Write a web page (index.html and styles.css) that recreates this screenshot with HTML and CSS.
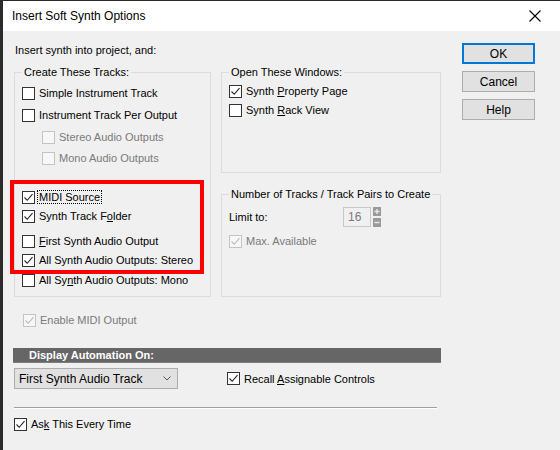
FILE: index.html
```html
<!DOCTYPE html>
<html>
<head>
<meta charset="utf-8">
<link rel="stylesheet" href="styles.css">
</head>
<body>
<div class="window">
  <div class="titlebar">
    <span class="title">Insert Soft Synth Options</span>
    <svg class="close" width="12" height="12" viewBox="0 0 12 12"><path d="M0.5 0.5 L11.5 11.5 M11.5 0.5 L0.5 11.5" stroke="#000" stroke-width="1.1" fill="none"/></svg>
  </div>
  <div class="content">
    <div class="main">
      <div class="intro">Insert synth into project, and:</div>
      <div class="groups">
        <fieldset class="group create">
          <legend>Create These Tracks:</legend>
          <div class="row mt7"><span class="cb"></span><span>Simple Instrument Track</span></div>
          <div class="row mt8"><span class="cb"></span><span>Instrument Track Per Output</span></div>
          <div class="row mt8 indent dis"><span class="cb"></span><span>Stereo Audio Outputs</span></div>
          <div class="row mt7 indent dis"><span class="cb"></span><span>Mono Audio Outputs</span></div>
          <div class="row mt25"><span class="cb on"><svg viewBox="0 0 11 11"><path d="M1.5 5.5 L4.2 8.3 L9.5 2.2" /></svg></span><span class="focus">MIDI Source</span></div>
          <div class="row mt5"><span class="cb on"><svg viewBox="0 0 11 11"><path d="M1.5 5.5 L4.2 8.3 L9.5 2.2" /></svg></span><span>Synth Track F<u>o</u>lder</span></div>
          <div class="row mt11"><span class="cb"></span><span><u>F</u>irst Synth Audio Output</span></div>
          <div class="row mt5"><span class="cb on"><svg viewBox="0 0 11 11"><path d="M1.5 5.5 L4.2 8.3 L9.5 2.2" /></svg></span><span>All Synth Audio Outputs: Stereo</span></div>
          <div class="row mt6"><span class="cb"></span><span>All Sy<u>n</u>th Audio Outputs: Mono</span></div>
        </fieldset>
        <div class="rightcol">
          <fieldset class="group windows">
            <legend>Open These Windows:</legend>
            <div class="row mt5"><span class="cb on"><svg viewBox="0 0 11 11"><path d="M1.5 5.5 L4.2 8.3 L9.5 2.2" /></svg></span><span>Synth <u>P</u>roperty Page</span></div>
            <div class="row mt5"><span class="cb"></span><span>Synth <u>R</u>ack View</span></div>
          </fieldset>
          <fieldset class="group number">
            <legend>Number of Tracks / Track Pairs to Create</legend>
            <div class="limit">
              <span class="limit-label">Limit to:</span>
              <span class="numbox">16</span>
              <svg class="spin" width="8" height="20" viewBox="0 0 8 20">
                <rect x="0" y="0" width="8" height="9" fill="#9a9a9a"/>
                <rect x="0" y="11" width="8" height="9" fill="#9a9a9a"/>
                <path d="M1.5 4.5 H6.5 M4 2 V7 M1.5 15.5 H6.5" stroke="#e8e8e8" stroke-width="1.4"/>
              </svg>
            </div>
            <div class="row mt7 dis"><span class="cb on"><svg viewBox="0 0 11 11"><path d="M1.5 5.5 L4.2 8.3 L9.5 2.2" /></svg></span><span>Max. Available</span></div>
          </fieldset>
        </div>
      </div>
      <div class="row enable dis"><span class="cb on"><svg viewBox="0 0 11 11"><path d="M1.5 5.5 L4.2 8.3 L9.5 2.2" /></svg></span><span>Enable MIDI Output</span></div>
      <div class="bar">Display Automation On:</div>
      <div class="autorow">
        <div class="select">
          <span>First Synth Audio Track</span>
          <svg width="8" height="5" viewBox="0 0 8 5"><path d="M0.5 0.5 L4 4 L7.5 0.5" stroke="#555" fill="none"/></svg>
        </div>
        <div class="row recall"><span class="cb on"><svg viewBox="0 0 11 11"><path d="M1.5 5.5 L4.2 8.3 L9.5 2.2" /></svg></span><span>Recall <u>A</u>ssignable Controls</span></div>
      </div>
      <div class="sep"></div>
      <div class="row ask"><span class="cb on"><svg viewBox="0 0 11 11"><path d="M1.5 5.5 L4.2 8.3 L9.5 2.2" /></svg></span><span>As<u>k</u> This Every Time</span></div>
    </div>
    <div class="side">
      <div class="btn default">OK</div>
      <div class="btn">Cancel</div>
      <div class="btn">Help</div>
    </div>
  </div>
  <div class="highlight"></div>
</div>
</body>
</html>
```
FILE: styles.css
```css
html, body {
  margin: 0;
  padding: 0;
}
body {
  width: 560px;
  height: 450px;
  overflow: hidden;
  background: #2b2b2b;
  font-family: "Liberation Sans", Arial, sans-serif;
  font-size: 11px;
  color: #000;
}
.window {
  position: relative;
  margin-left: 3px;
  margin-top: 1px;
  height: 449px;
  background: #f0f0f0;
}
.titlebar {
  height: 30px;
  background: #fff;
  display: flex;
  align-items: center;
  justify-content: space-between;
  padding: 0 19px 0 9px;
}
.title {
  font-size: 12px;
  color: #000;
}
.close {
  display: block;
}
.content {
  display: flex;
}
.main {
  width: 430px;
  padding-left: 10px;
  padding-top: 12px;
}
.intro {
  height: 14px;
  line-height: 14px;
  padding-left: 2px;
}
.groups {
  display: flex;
  margin-top: 8px;
  margin-left: 1px;
  gap: 10px;
}
fieldset.group {
  margin: 0;
  border: 1px solid #dcdcdc;
  padding: 0 6px 0 7px;
  box-sizing: border-box;
  min-width: 0;
}
fieldset.group legend {
  padding: 0 2px;
  margin-left: 0;
  line-height: 14px;
  height: 14px;
}
.create {
  width: 197px;
  height: 232px;
}
.rightcol {
  width: 220px;
  display: flex;
  flex-direction: column;
}
.windows {
  height: 108px;
}
.number {
  margin-top: 14px !important;
  height: 110px;
}
.row {
  display: flex;
  align-items: center;
  height: 14px;
  line-height: 14px;
  white-space: nowrap;
}
.mt5 { margin-top: 5px; }
.mt6 { margin-top: 6px; }
.mt7 { margin-top: 7px; }
.mt8 { margin-top: 8px; }
.mt11 { margin-top: 11px; }
.mt25 { margin-top: 25px; }
.indent {
  padding-left: 20px;
}
.cb {
  width: 13px;
  height: 13px;
  box-sizing: border-box;
  border: 1px solid #333;
  background: #fff;
  margin-right: 4px;
  flex: none;
  display: flex;
  align-items: center;
  justify-content: center;
}
.cb svg {
  width: 11px;
  height: 11px;
  display: block;
}
.cb svg path {
  fill: none;
  stroke: #222;
  stroke-width: 1.1;
}
.dis {
  color: #7a7a7a;
}
.dis .cb {
  border-color: #c4c4c4;
  background: #f7f7f7;
}
.dis .cb svg path {
  stroke: #b8b8b8;
}
.focus {
  outline: 1px dotted #000;
  outline-offset: 0;
  line-height: 12px;
  padding: 0 1px;
  margin-left: -1px;
}
u {
  text-decoration: underline;
  text-underline-offset: 1px;
}
.limit {
  display: flex;
  align-items: center;
  height: 20px;
  margin-top: 6px;
}
.limit-label {
  width: 114px;
}
.numbox {
  width: 28px;
  height: 20px;
  box-sizing: border-box;
  border: 1px solid #c8c8c8;
  background: #f0f0f0;
  color: #7a7a7a;
  font-size: 12px;
  line-height: 18px;
  padding-left: 4px;
}
.spin {
  display: block;
  margin-left: 2px;
}
.enable {
  margin-top: 16px;
  padding-left: 10px;
}
.bar {
  margin-top: 21px;
  width: 428px;
  height: 15px;
  box-sizing: border-box;
  background: #666666;
  border-bottom: 1px solid #7e7e7e;
  color: #fff;
  font-weight: bold;
  line-height: 14px;
  padding-left: 16px;
}
.autorow {
  display: flex;
  align-items: center;
  margin-top: 5px;
  padding-left: 1px;
}
.select {
  width: 164px;
  height: 21px;
  box-sizing: border-box;
  border: 1px solid #adadad;
  background: #e1e1e1;
  display: flex;
  align-items: center;
  justify-content: space-between;
  padding: 0 6px 0 4px;
  font-size: 12px;
}
.select svg {
  display: block;
}
.recall {
  margin-left: 49px;
}
.sep {
  margin-top: 18px;
  margin-left: 1px;
  width: 423px;
  height: 1px;
  background: #a0a0a0;
  border-bottom: 1px solid #fff;
}
.ask {
  margin-top: 8px;
  padding-left: 1px;
}
.side {
  margin-left: 19px;
  padding-top: 12px;
  display: flex;
  flex-direction: column;
  gap: 7px;
}
.btn {
  width: 73px;
  height: 21px;
  box-sizing: border-box;
  border: 1px solid #adadad;
  background: #e1e1e1;
  display: flex;
  align-items: center;
  justify-content: center;
  font-size: 12px;
}
.btn.default {
  border: 2px solid #0078d7;
}
.highlight {
  position: absolute;
  left: 7px;
  top: 179px;
  width: 194px;
  height: 94px;
  box-sizing: border-box;
  border: 4px solid #ff0000;
  pointer-events: none;
}
```
